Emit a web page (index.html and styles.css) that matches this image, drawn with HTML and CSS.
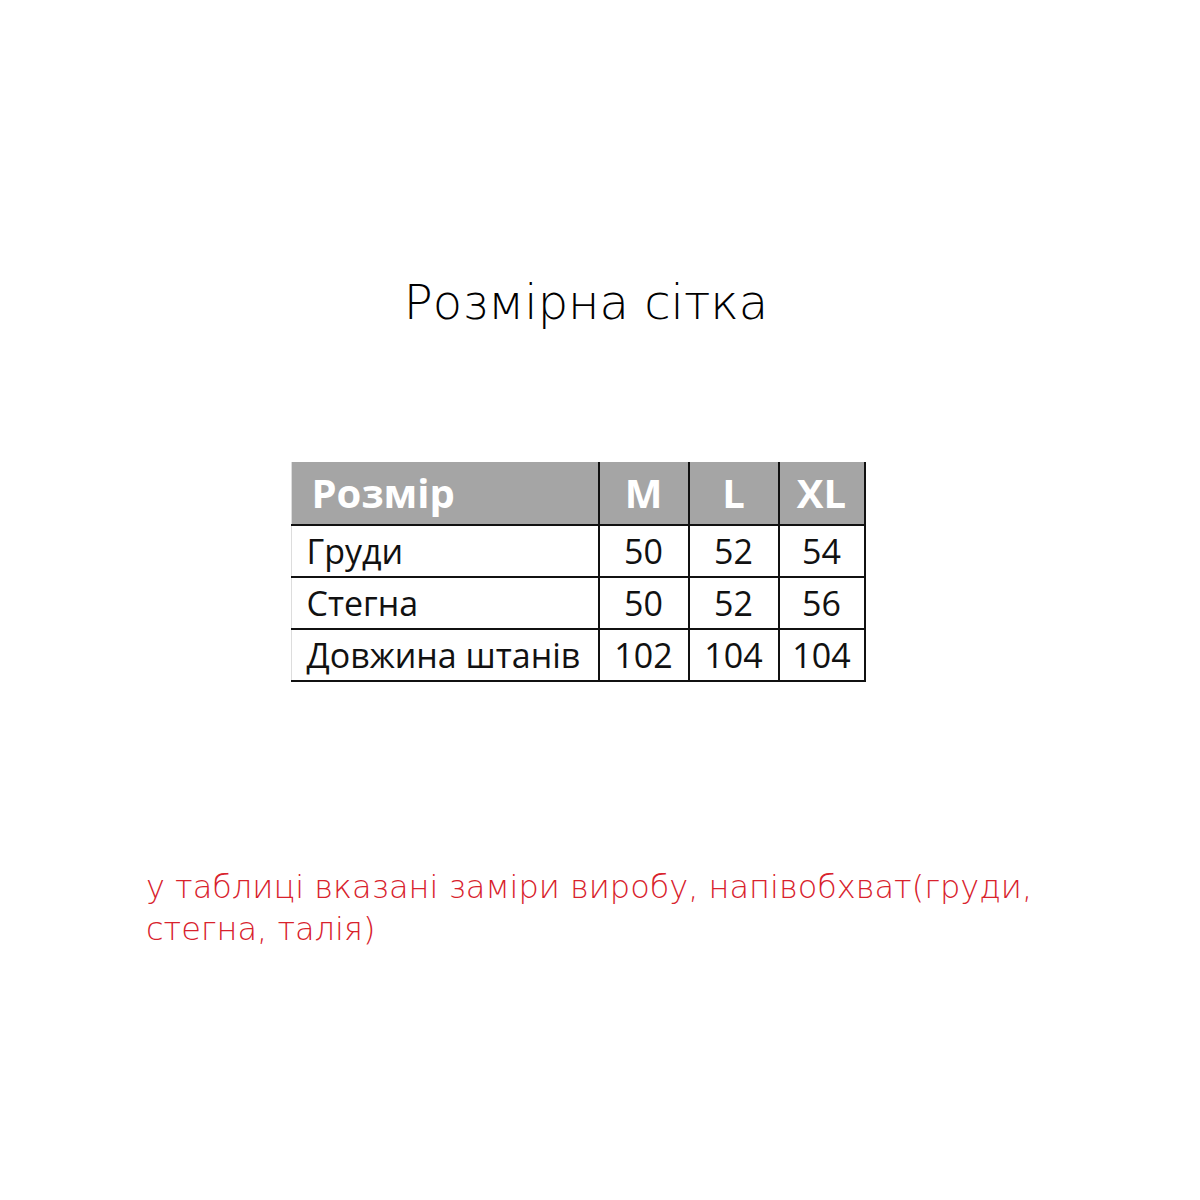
FILE: index.html
```html
<!DOCTYPE html>
<html lang="uk">
<head>
<meta charset="utf-8">
<title>Розмірна сітка</title>
<link rel="stylesheet" href="styles.css">
</head>
<body>
<div class="page">
  <h1 class="title">Розмірна сітка</h1>
  <table class="sizes">
    <thead>
      <tr>
        <th class="label">Розмір</th>
        <th>M</th>
        <th>L</th>
        <th>XL</th>
      </tr>
    </thead>
    <tbody>
      <tr><td class="label">Груди</td><td>50</td><td>52</td><td>54</td></tr>
      <tr><td class="label">Стегна</td><td>50</td><td>52</td><td>56</td></tr>
      <tr><td class="label">Довжина штанів</td><td>102</td><td>104</td><td>104</td></tr>
    </tbody>
  </table>
  <p class="note">у таблиці вказані заміри виробу, напівобхват(груди, стегна, талія)</p>
</div>
</body>
</html>
```
FILE: styles.css
```css
html, body {
  margin: 0;
  padding: 0;
  background: #fff;
}
.page {
  width: 1200px;
  height: 1200px;
  display: flex;
  flex-direction: column;
  align-items: center;
  box-sizing: border-box;
  padding-top: 270px;
}
.title {
  margin: 0 0 0 -28px;
  font-family: "DejaVu Sans", sans-serif;
  font-weight: 200;
  font-size: 48px;
  line-height: 64px;
  color: #000;
}
.sizes {
  margin-top: 128px;
  margin-left: -44px;
  border-collapse: collapse;
  font-family: "Open Sans", sans-serif;
  color: #111;
}
.sizes th {
  background: #a5a5a5;
  color: #fff;
  font-weight: 700;
  font-size: 40px;
  line-height: 52px;
  height: 62px;
  padding: 0;
  border-left: 2px solid #111;
  border-bottom: 2px solid #111;
  text-align: center;
}
.sizes th.label {
  border-left: 1px solid #ddd;
  text-align: left;
  padding-left: 20px;
  width: 286px;
}
.sizes th:last-child,
.sizes td:last-child {
  border-right: 2px solid #111;
}
.sizes td {
  font-size: 34px;
  line-height: 48px;
  height: 50px;
  padding: 0;
  text-align: center;
  border-left: 2px solid #111;
  border-bottom: 2px solid #111;
  width: 88px;
}
.sizes td:last-child { width: 84px; }
.sizes td.label {
  border-left: 1px solid #ddd;
  text-align: left;
  padding-left: 15px;
  width: auto;
}
.note {
  align-self: flex-start;
  margin: 184px 0 0 146px;
  width: 920px;
  font-family: "DejaVu Sans", sans-serif;
  font-weight: 200;
  font-size: 32px;
  line-height: 42px;
  color: #d8222c;
}
```
